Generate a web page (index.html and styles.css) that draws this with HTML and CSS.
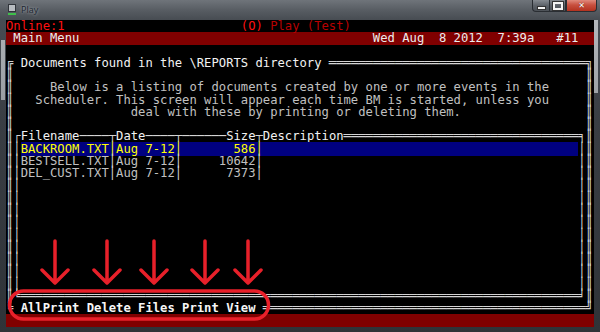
FILE: index.html
```html
<!DOCTYPE html>
<html>
<head>
<meta charset="utf-8">
<title>Play</title>
<link rel="stylesheet" href="styles.css">
</head>
<body>
<div class="window">
  <div class="titlebar">
    <div class="appicon"><span class="mon"></span><span class="base"></span></div>
    <div class="title">Play</div>
    <div class="controls">
      <div class="btn min"><span class="glyph-min"></span></div>
      <div class="btn max"><span class="glyph-max"></span></div>
      <div class="btn close">✕</div>
    </div>
  </div>
  <div class="client">
<div class="row"><span class="red">Online:1</span>                        <span class="red">(O)</span> <span class="dred">Play (Test)</span></div>
<div class="row bar"> Main Menu                                        Wed Aug  8 2012  7:39a   #11  </div>
<div class="row"> </div>
<div class="row box">╔ <span class="hi">Documents found in the \REPORTS directory</span> ═══════════════════════════════════╗</div>
<div class="row box">║                                                                              ║</div>
<div class="row box">║     <span class="txt">Below is a listing of documents created by one or more events in the</span>     ║</div>
<div class="row box">║   <span class="txt">Scheduler. This screen will appear each time BM is started, unless you</span>     ║</div>
<div class="row box">║                <span class="txt">deal with these by printing or deleting them.</span>                 ║</div>
<div class="row box">║                                                                              ║</div>
<div class="row box">║┌<span class="hi">Filename</span>────┬<span class="hi">Date</span>────┬──────<span class="hi">Size</span>┬<span class="hi">Description</span>════════════════════════════════╕║</div>
<div class="row box">║│<span class="sel">BACKROOM.TXT│Aug 7-12│       586│                                           </span>│║</div>
<div class="row box">║│<span class="txt">BESTSELL.TXT</span>│<span class="txt">Aug 7-12</span>│<span class="txt">     10642</span>│                                           │║</div>
<div class="row box">║│<span class="txt">DEL_CUST.TXT</span>│<span class="txt">Aug 7-12</span>│<span class="txt">      7373</span>│                                           │║</div>
<div class="row box">║│                                                                            │║</div>
<div class="row box">║│                                                                            │║</div>
<div class="row box">║│                                                                            │║</div>
<div class="row box">║│                                                                            │║</div>
<div class="row box">║│                                                                            │║</div>
<div class="row box">║│                                                                            │║</div>
<div class="row box">║│                                                                            │║</div>
<div class="row box">║│                                                                            │║</div>
<div class="row box">║│                                                                            │║</div>
<div class="row box">║╘════════════════════════════════════════════════════════════════════════════╛║</div>
<div class="row box">╚ <span class="menu">AllPrint Delete Files Print View</span> ════════════════════════════════════════════╝</div>
<div class="row bar"> </div>
  </div>
  <svg class="annot" width="600" height="332" viewBox="0 0 600 332">
    <g fill="none" stroke="#e8202a" stroke-width="3.5" stroke-linecap="round" stroke-linejoin="round">
      <path d="M55 241 V282 M42 270 L55 283 L68 270"/>
      <path d="M107 241 V282 M94 270 L107 283 L120 270"/>
      <path d="M154 241 V282 M141 270 L154 283 L167 270"/>
      <path d="M205 241 V282 M192 270 L205 283 L218 270"/>
      <path d="M248 241 V282 M235 270 L248 283 L261 270"/>
      <rect x="9.5" y="291" width="259" height="28" rx="14" ry="14"/>
    </g>
  </svg>
</div>
</body>
</html>
```

FILE: styles.css
```css
html, body {
  margin: 0;
  padding: 0;
  background: #2b2f34;
}

.window {
  position: relative;
  width: 600px;
  height: 332px;
  display: flex;
  flex-direction: column;
  overflow: hidden;
  background:
    linear-gradient(#a9adb1, #9a9ea3) 1px 40px / 4px 60px no-repeat,
    linear-gradient(#b4b8bc, #9ea2a6) 594px 20px / 4px 73px no-repeat,
    linear-gradient(180deg, #6f747a 0px, #585d63 10px, #474c52 20px, #3a3e44 120px, #2f3338 332px);
}

.titlebar {
  height: 20px;
  flex: none;
  display: flex;
  align-items: flex-start;
}

.appicon {
  margin: 4px 0 0 8px;
  width: 8px;
  height: 11px;
  display: flex;
  flex-direction: column;
  gap: 1px;
}

.appicon .mon {
  display: block;
  height: 6px;
  background: #b8bcc0;
  border: 1px solid #30343a;
}

.appicon .base {
  display: block;
  height: 2px;
  background: #3fbf4a;
}

.title {
  margin: 4px 0 0 5px;
  font-family: "Open Sans", "DejaVu Sans", sans-serif;
  font-size: 9px;
  line-height: 11px;
  color: #1b2530;
  text-shadow: 0 0 3px rgba(230, 235, 240, 0.7);
}

.controls {
  margin-left: auto;
  margin-right: 3px;
  display: flex;
}

.btn {
  height: 12px;
  box-sizing: border-box;
  border: 1px solid #2a2e33;
  border-top: none;
  display: flex;
  align-items: center;
  justify-content: center;
}

.min, .max {
  width: 17px;
  background: linear-gradient(180deg, #858a90 0%, #5d6269 50%, #4c5157 100%);
}

.min {
  border-radius: 0 0 0 4px;
  border-right: none;
}

.glyph-min {
  display: block;
  width: 7px;
  height: 2px;
  margin-top: 4px;
  background: #f4f4f4;
  border: 1px solid #333;
}

.glyph-max {
  display: block;
  width: 6px;
  height: 4px;
  border: 2px solid #f4f4f4;
  border-top-width: 2px;
  outline: 1px solid #333;
}

.close {
  width: 31px;
  border-radius: 0 0 4px 0;
  background: linear-gradient(180deg, #e08a7c 0%, #c8503f 45%, #b3321f 100%);
  color: #ffffff;
  font-family: "DejaVu Sans", sans-serif;
  font-size: 8px;
  font-weight: bold;
  line-height: 1;
  text-shadow: 0 0 1px #4a0d05;
}

.client {
  margin: 0 6px;
  width: 588px;
  height: 307px;
  flex: none;
  background: #000000;
  overflow: hidden;
}

.row {
  height: 12.28px;
  white-space: pre;
  font-family: "DejaVu Sans Mono", monospace;
  font-size: 12.2px;
  line-height: 12.28px;
  color: #c8c8c8;
}

.bar {
  background: #800000;
  color: #ececec;
}

.box {
  color: #d4d4d4;
}

.red {
  color: #ff1010;
}

.dred {
  color: #b80000;
}

.hi {
  color: #f2f2f2;
}

.txt {
  color: #c0c0c0;
}

.sel {
  background: #000080;
  color: #ffff00;
}

.menu {
  color: #f6f6f6;
  font-weight: bold;
}

.annot {
  position: absolute;
  left: 0;
  top: 0;
  pointer-events: none;
}
```
